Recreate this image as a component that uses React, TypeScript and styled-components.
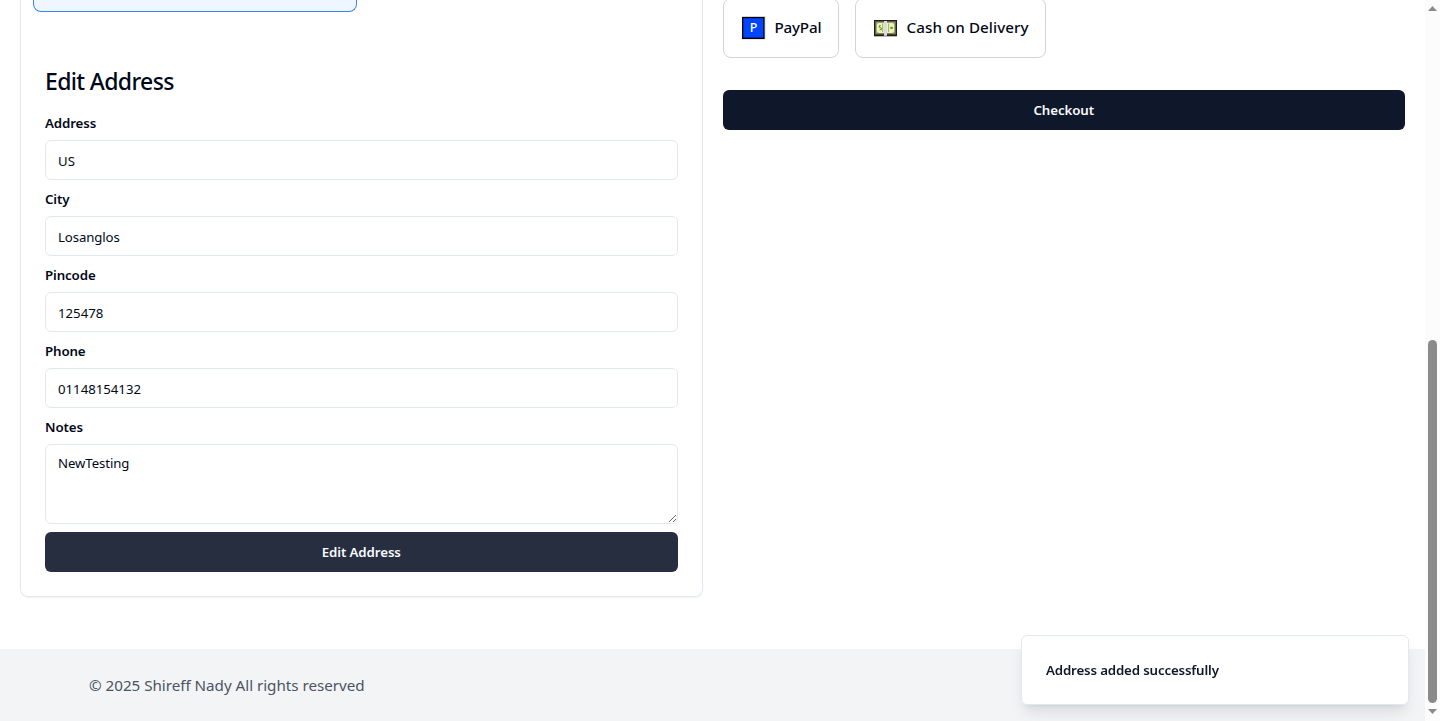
import React from "react";
import styled, { createGlobalStyle } from "styled-components";

const GlobalStyle = createGlobalStyle`
  *, *::before, *::after { box-sizing: border-box; }
  html, body { margin: 0; padding: 0; height: 100%; overflow: hidden; }
  body {
    background: #fff;
    color: #020817;
    font-family: "Segoe UI", "Noto Sans", "Open Sans", sans-serif;
    font-size: 15px;
  }
  h2, p { margin: 0; }
  input, textarea, button { font-family: inherit; margin: 0; }
`;

const Shell = styled.div`
  display: flex;
  width: 100%;
  height: 721px;
  overflow: hidden;
`;

const Page = styled.div`
  flex: 1;
  min-width: 0;
  display: flex;
  flex-direction: column;
`;

const Columns = styled.main`
  display: grid;
  grid-template-columns: 1fr 1fr;
  align-items: start;
  gap: 20px;
  padding: 0 20px;
  height: 649px;
`;

const AddressCard = styled.section`
  height: 597px;
  border: 1px solid #e2e8f0;
  border-top: 0;
  border-radius: 0 0 8px 8px;
  box-shadow: 0 1px 2px rgba(0, 0, 0, 0.05);
`;

const SavedAddress = styled.div`
  width: 324px;
  height: 12px;
  margin-left: 12px;
  background: #eff6ff;
  border: 1px solid #3b82f6;
  border-top: 0;
  border-radius: 0 0 8px 8px;
`;

const Form = styled.form`
  display: flex;
  flex-direction: column;
  padding: 54px 24px 0;
`;

const Title = styled.h2`
  height: 32px;
  margin-bottom: 14px;
  line-height: 31px;
  font-size: 23px;
  font-weight: 500;
  letter-spacing: -0.65px;
`;

const Field = styled.div`
  display: flex;
  flex-direction: column;
  margin-bottom: 8px;
`;

const Label = styled.label`
  height: 22px;
  margin-bottom: 6px;
  line-height: 22px;
  font-size: 13.3px;
  font-weight: 600;
  letter-spacing: -0.12px;
`;

const Input = styled.input<{ $spacing?: number }>`
  height: 40px;
  padding: 9px 12px 7px;
  border: 1px solid #e2e8f0;
  border-radius: 6px;
  background: #fff;
  color: #020817;
  font-size: 13.2px;
  letter-spacing: ${(p) => p.$spacing ?? 0}px;
  outline: none;
`;

const TextArea = styled.textarea`
  height: 80px;
  padding: 8px 12px;
  border: 1px solid #e2e8f0;
  border-radius: 6px;
  background: #fff;
  color: #020817;
  font-size: 13.2px;
  line-height: 20px;
  letter-spacing: -0.08px;
  resize: vertical;
  outline: none;
`;

const Button = styled.button<{ $hovered?: boolean }>`
  display: block;
  width: 100%;
  height: 40px;
  padding: 0;
  border: 0;
  border-radius: 6px;
  background: ${(p) => (p.$hovered ? "#272e3f" : "#0f172a")};
  color: #f8fafc;
  font-size: 13.3px;
  font-weight: 600;
  letter-spacing: -0.1px;
`;

const Payment = styled.section`
  display: flex;
  flex-direction: column;
  gap: 32px;
  margin-top: -2px;
`;

const Methods = styled.div`
  display: flex;
  gap: 16px;
`;

const Method = styled.div<{ $width: number; $spacing: number }>`
  display: flex;
  align-items: center;
  gap: 9px;
  width: ${(p) => p.$width}px;
  height: 60px;
  padding-left: 18px;
  border: 1px solid #d1d5db;
  border-radius: 8px;
  font-size: 15.2px;
  font-weight: 500;
  white-space: nowrap;
  letter-spacing: ${(p) => p.$spacing}px;

  svg { flex: none; }
`;

const MethodName = styled.span`
  padding-bottom: 2px;
`;

const Footer = styled.footer`
  flex: 1;
  padding: 24px 89px;
  background: #f3f4f6;
  color: #4b5563;
  font-size: 15.2px;
  line-height: 24px;
  letter-spacing: -0.02px;
`;

const Toast = styled.div`
  position: fixed;
  left: 1021px;
  top: 635px;
  display: flex;
  align-items: center;
  width: 388px;
  height: 70px;
  padding: 0 24px;
  border: 1px solid #e2e8f0;
  border-radius: 6px;
  background: #fff;
  box-shadow: 0 10px 15px -3px rgba(0, 0, 0, 0.1), 0 4px 6px -4px rgba(0, 0, 0, 0.1);
  font-size: 13.3px;
  font-weight: 600;
  color: #0f172a;
  letter-spacing: -0.16px;
`;

const Track = styled.div`
  display: flex;
  flex-direction: column;
  align-items: center;
  width: 15px;
  padding: 6px 0 7px;
  background: #fcfcfc;

  svg { display: block; }
`;

const Thumb = styled.div`
  width: 9px;
  height: 363px;
  margin: auto 0 6px;
  border-radius: 5px;
  background: #8b8b8b;
`;

const PayPalIcon = () => (
  <svg width="24" height="24" viewBox="0 0 24 24">
    <rect x="0" y="0" width="23.5" height="23.5" fill="#d4d4d4" />
    <rect x="0" y="1" width="22.6" height="22" fill="#000" />
    <rect x="1.3" y="2.2" width="20" height="19.4" fill="#0046ff" />
    <text x="11.4" y="16.4" fill="#fff" fontSize="12.5" fontFamily="Noto Sans, sans-serif" textAnchor="middle">P</text>
  </svg>
);

const CashIcon = () => (
  <svg width="24" height="24" viewBox="0 0 24 24">
    <rect x="0" y="4" width="23" height="16.3" fill="#1c1d18" />
    <rect x="1" y="5" width="21" height="13.6" fill="#5f614b" />
    <rect x="2.5" y="6.6" width="18" height="10.6" fill="#eff3b5" />
    <path d="M2.5 6.6h2.5l-2.5 2.5zM20.5 6.6h-2.5l2.5 2.5zM2.5 17.2h2.5l-2.5-2.5zM20.5 17.2h-2.5l2.5-2.5z" fill="#a9ad78" />
    <path d="M6.8 9.5c-2 0-2 1.7-.4 2.2 1.8.5 1.5 2.2-.7 2.2" fill="none" stroke="#48a51d" strokeWidth="1.1" />
    <path d="M8.7 7.5v8.6M14.6 7.5v8.6" stroke="#9a9d75" strokeWidth="0.9" />
    <rect x="16.2" y="10.7" width="2.8" height="2.4" rx="1" fill="#48a51d" />
    <rect x="10" y="5" width="3" height="14.8" fill="#dadbe0" />
  </svg>
);

export default function App() {
  return (
    <>
      <GlobalStyle />
      <Shell>
        <Page>
          <Columns>
            <AddressCard>
              <SavedAddress />
              <Form>
                <Title>Edit Address</Title>
                <Field>
                  <Label>Address</Label>
                  <Input defaultValue="US" />
                </Field>
                <Field>
                  <Label>City</Label>
                  <Input defaultValue="Losanglos" $spacing={-0.1} />
                </Field>
                <Field>
                  <Label>Pincode</Label>
                  <Input defaultValue="125478" />
                </Field>
                <Field>
                  <Label>Phone</Label>
                  <Input defaultValue="01148154132" />
                </Field>
                <Field>
                  <Label>Notes</Label>
                  <TextArea defaultValue="NewTesting" spellCheck={false} />
                </Field>
                <Button type="button" $hovered>Edit Address</Button>
              </Form>
            </AddressCard>
            <Payment>
              <Methods>
                <Method $width={116} $spacing={-0.2}>
                  <PayPalIcon />
                  <MethodName>PayPal</MethodName>
                </Method>
                <Method $width={191} $spacing={0.06}>
                  <CashIcon />
                  <MethodName>Cash on Delivery</MethodName>
                </Method>
              </Methods>
              <Button type="button">Checkout</Button>
            </Payment>
          </Columns>
          <Footer>© 2025 Shireff Nady All rights reserved</Footer>
        </Page>
        <Track>
          <svg width="9" height="5" viewBox="0 0 9 5"><path d="M4.5 0 9 5H0z" fill="#8b8b8b" /></svg>
          <Thumb />
          <svg width="9" height="5" viewBox="0 0 9 5"><path d="M0 0h9L4.5 5z" fill="#8b8b8b" /></svg>
        </Track>
      </Shell>
      <Toast>Address added successfully</Toast>
    </>
  );
}
